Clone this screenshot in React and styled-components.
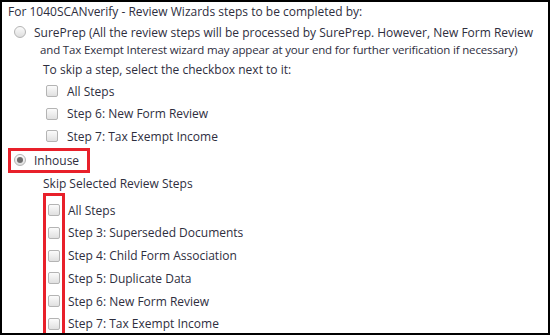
import React from 'react'
import styled, { createGlobalStyle } from 'styled-components'

const GlobalStyle = createGlobalStyle`
  html, body {
    margin: 0;
    padding: 0;
    background: #ffffff;
  }
  * {
    box-sizing: border-box;
  }
`

const firstSteps = ['All Steps', 'Step 6: New Form Review', 'Step 7: Tax Exempt Income']

const inhouseSteps = [
  'All Steps',
  'Step 3: Superseded Documents',
  'Step 4: Child Form Association',
  'Step 5: Duplicate Data',
  'Step 6: New Form Review',
  'Step 7: Tax Exempt Income',
]

const App = () => {
  return (
    <>
      <GlobalStyle />
      <StPanel>
        <StTitle>For 1040SCANverify - Review Wizards steps to be completed by:</StTitle>

        <StOption>
          <StRadio />
          <StOptionText>
            <span>SurePrep (All the review steps will be processed by SurePrep. However, New Form Review</span>
            <StWrapLine>and Tax Exempt Interest wizard may appear at your end for further verification if necessary)</StWrapLine>
          </StOptionText>
        </StOption>

        <StNote>To skip a step, select the checkbox next to it:</StNote>

        <StCheckList>
          {firstSteps.map((step) => (
            <StCheckRow key={step}>
              <StCheckbox />
              <StCheckLabel>{step}</StCheckLabel>
            </StCheckRow>
          ))}
        </StCheckList>

        <StOption $highlight>
          <StRadio $checked />
          <StOptionText>Inhouse</StOptionText>
        </StOption>

        <StNote $gap="2px">Skip Selected Review Steps</StNote>

        <StSkipGrid>
          <StBoxColumn>
            {inhouseSteps.map((step) => (
              <StBoxCell key={step}>
                <StCheckbox />
              </StBoxCell>
            ))}
          </StBoxColumn>
          <StLabelColumn>
            {inhouseSteps.map((step) => (
              <StBoxCell key={step}>
                <StCheckLabel>{step}</StCheckLabel>
              </StBoxCell>
            ))}
          </StLabelColumn>
        </StSkipGrid>
      </StPanel>
    </>
  )
}

export default App

const StPanel = styled.div`
  width: 550px;
  height: 335px;
  border: 2px solid #000000;
  padding: 2px 0 0 6px;
  overflow: hidden;
  font-family: 'Open Sans', 'Noto Sans', sans-serif;
  font-size: 12px;
  color: #2e2e3e;
  background: #ffffff;
`

const StTitle = styled.div`
  line-height: 16px;
  white-space: nowrap;
`

const StOption = styled.div`
  display: flex;
  align-items: ${(p) => (p.$highlight ? 'center' : 'flex-start')};
  width: ${(p) => (p.$highlight ? '82px' : 'auto')};
  height: ${(p) => (p.$highlight ? '25px' : 'auto')};
  margin-top: ${(p) => (p.$highlight ? '0' : '1px')};
  border: 3px solid ${(p) => (p.$highlight ? '#e8202a' : 'transparent')};
  padding: 0 3px;
  gap: 8px;
`

const StRadio = styled.span`
  position: relative;
  flex: none;
  width: 12px;
  height: 12px;
  margin-top: ${(p) => (p.$checked ? '0' : '2px')};
  border-radius: 50%;
  border: 1px solid #b4b4b4;
  background: linear-gradient(#fbfbfb, #dedede);

  &::after {
    content: '';
    display: ${(p) => (p.$checked ? 'block' : 'none')};
    position: absolute;
    left: 2px;
    top: 2px;
    width: 6px;
    height: 6px;
    border-radius: 50%;
    background: #6e6e6e;
  }
`

const StOptionText = styled.div`
  display: flex;
  flex-direction: column;
  line-height: 17px;
  white-space: nowrap;
`

const StWrapLine = styled.span`
  padding-left: 6px;
  font-size: 11.5px;
  letter-spacing: -0.15px;
`

const StNote = styled.div`
  margin: ${(p) => p.$gap || '0'} 0 0 35px;
  line-height: 17px;
`

const StCheckList = styled.div`
  display: flex;
  flex-direction: column;
  margin: 2px 0 0 38px;
`

const StCheckRow = styled.div`
  display: flex;
  align-items: center;
  gap: 9px;
  height: 22.6px;
`

const StCheckbox = styled.span`
  flex: none;
  width: 12px;
  height: 12px;
  border-radius: 2px;
  border: 1px solid #b4b4b4;
  background: linear-gradient(#fbfbfb, #e0e0e0);
`

const StCheckLabel = styled.span`
  white-space: nowrap;
`

const StSkipGrid = styled.div`
  display: grid;
  grid-template-columns: 22px auto;
  column-gap: 3px;
  margin: 1px 0 0 35px;
`

const StBoxColumn = styled.div`
  display: flex;
  flex-direction: column;
  border: 3px solid #e8202a;
  padding: 3px 0 20px 2px;
`

const StLabelColumn = styled.div`
  display: flex;
  flex-direction: column;
  padding-top: 6px;
`

const StBoxCell = styled.div`
  display: flex;
  align-items: center;
  height: 22.75px;
`
